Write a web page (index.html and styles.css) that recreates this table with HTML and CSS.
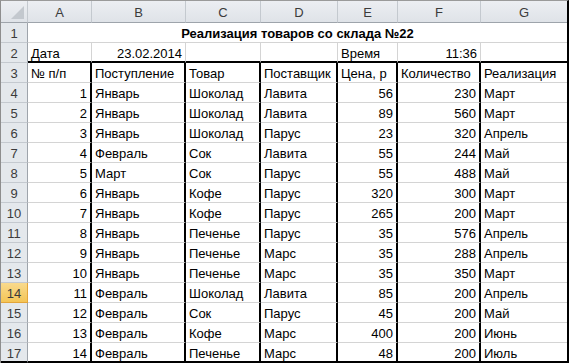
FILE: index.html
```html
<!DOCTYPE html>
<html lang="ru">
<head>
<meta charset="utf-8">
<title>Реализация товаров</title>
<link rel="stylesheet" href="styles.css">
</head>
<body>
<div class="sheet">
  <div class="hd corner"><span class="tri"></span></div>
  <div class="hd col">A</div><div class="hd col">B</div><div class="hd col">C</div><div class="hd col">D</div><div class="hd col">E</div><div class="hd col">F</div><div class="hd col last">G</div>

  <div class="hd row">1</div>
  <div class="c title">Реализация товаров со склада №22</div>

  <div class="hd row">2</div>
  <div class="c top">Дата</div><div class="c top r">23.02.2014</div><div class="c top"></div><div class="c top"></div><div class="c top">Время</div><div class="c top r">11:36</div><div class="c top last"></div>

  <div class="hd row">3</div>
  <div class="c t">№ п/п</div><div class="c t">Поступление</div><div class="c t">Товар</div><div class="c t">Поставщик</div><div class="c t">Цена, р</div><div class="c t">Количество</div><div class="c last">Реализация</div>

  <div class="hd row">4</div>
  <div class="c t r">1</div><div class="c t">Январь</div><div class="c t">Шоколад</div><div class="c t">Лавита</div><div class="c t r">56</div><div class="c t r">230</div><div class="c last">Март</div>

  <div class="hd row">5</div>
  <div class="c t r">2</div><div class="c t">Январь</div><div class="c t">Шоколад</div><div class="c t">Лавита</div><div class="c t r">89</div><div class="c t r">560</div><div class="c last">Март</div>

  <div class="hd row">6</div>
  <div class="c t r">3</div><div class="c t">Январь</div><div class="c t">Шоколад</div><div class="c t">Парус</div><div class="c t r">23</div><div class="c t r">320</div><div class="c last">Апрель</div>

  <div class="hd row">7</div>
  <div class="c t r">4</div><div class="c t">Февраль</div><div class="c t">Сок</div><div class="c t">Лавита</div><div class="c t r">55</div><div class="c t r">244</div><div class="c last">Май</div>

  <div class="hd row">8</div>
  <div class="c t r">5</div><div class="c t">Март</div><div class="c t">Сок</div><div class="c t">Парус</div><div class="c t r">55</div><div class="c t r">488</div><div class="c last">Май</div>

  <div class="hd row">9</div>
  <div class="c t r">6</div><div class="c t">Январь</div><div class="c t">Кофе</div><div class="c t">Парус</div><div class="c t r">320</div><div class="c t r">300</div><div class="c last">Март</div>

  <div class="hd row">10</div>
  <div class="c t r">7</div><div class="c t">Январь</div><div class="c t">Кофе</div><div class="c t">Парус</div><div class="c t r">265</div><div class="c t r">200</div><div class="c last">Март</div>

  <div class="hd row">11</div>
  <div class="c t r">8</div><div class="c t">Январь</div><div class="c t">Печенье</div><div class="c t">Парус</div><div class="c t r">35</div><div class="c t r">576</div><div class="c last">Апрель</div>

  <div class="hd row">12</div>
  <div class="c t r">9</div><div class="c t">Январь</div><div class="c t">Печенье</div><div class="c t">Марс</div><div class="c t r">35</div><div class="c t r">288</div><div class="c last">Апрель</div>

  <div class="hd row">13</div>
  <div class="c t r">10</div><div class="c t">Январь</div><div class="c t">Печенье</div><div class="c t">Марс</div><div class="c t r">35</div><div class="c t r">350</div><div class="c last">Март</div>

  <div class="hd row sel">14</div>
  <div class="c t r">11</div><div class="c t">Февраль</div><div class="c t">Шоколад</div><div class="c t">Лавита</div><div class="c t r">85</div><div class="c t r">200</div><div class="c last">Апрель</div>

  <div class="hd row">15</div>
  <div class="c t r">12</div><div class="c t">Февраль</div><div class="c t">Сок</div><div class="c t">Парус</div><div class="c t r">45</div><div class="c t r">200</div><div class="c last">Май</div>

  <div class="hd row">16</div>
  <div class="c t r">13</div><div class="c t">Февраль</div><div class="c t">Кофе</div><div class="c t">Марс</div><div class="c t r">400</div><div class="c t r">200</div><div class="c last">Июнь</div>

  <div class="hd row end">17</div>
  <div class="c t r end">14</div><div class="c t end">Февраль</div><div class="c t end">Печенье</div><div class="c t end">Марс</div><div class="c t r end">48</div><div class="c t r end">200</div><div class="c last end">Июль</div>
</div>
</body>
</html>
```

FILE: styles.css
```css
html, body {
  margin: 0;
  padding: 0;
  background: #ffffff;
}

.sheet {
  display: grid;
  grid-template-columns: 27px 64px 94px 75px 77px 60px 83px 86px;
  grid-template-rows: 22px repeat(17, 20px);
  width: 566px;
  border-left: 1px solid #8e8e8e;
  border-top: 1px solid #9a9a9a;
  border-right: 2px solid #000000;
  font-family: "Liberation Sans", Arial, sans-serif;
  font-size: 13px;
  color: #000000;
}

.hd {
  box-sizing: border-box;
  display: flex;
  align-items: center;
  justify-content: center;
  background: linear-gradient(#eceef2, #dfe3e8);
  color: #3b3b3b;
  font-size: 13px;
}

.col {
  border-right: 1px solid #c4c9cf;
  border-bottom: 1px solid #9ea4ab;
  padding-top: 1px;
}

.col.last {
  border-right: 0;
}

.corner {
  position: relative;
  border-right: 1px solid #c4c9cf;
  border-bottom: 1px solid #9ea4ab;
}

.tri {
  position: absolute;
  right: 3px;
  bottom: 3px;
  width: 0;
  height: 0;
  border-left: 13px solid transparent;
  border-bottom: 13px solid #c3c8ce;
}

.row {
  background: #e4e8ec;
  border-right: 1px solid #9ea4ab;
  border-bottom: 1px solid #c4c9cf;
  padding-top: 2px;
}

.row.sel {
  background: linear-gradient(#f9da8d, #f4c556);
  border-right: 1px solid #e3a53a;
  border-bottom: 1px solid #e3a53a;
}

.c {
  box-sizing: border-box;
  display: flex;
  align-items: center;
  white-space: nowrap;
  overflow: hidden;
  padding: 2px 3px 0 3px;
  border-right: 1px solid #d4d4d4;
  border-bottom: 1px solid #d4d4d4;
}

.c.r {
  justify-content: flex-end;
}

.c.title {
  grid-column: span 7;
  justify-content: center;
  font-weight: bold;
  border-right: 0;
}

.c.top {
  border-bottom: 2px solid #000000;
}

.c.t {
  border-right: 2px solid #000000;
}

.c.last {
  border-right: 0;
}

.c.end {
  border-bottom: 2px solid #000000;
}

.row.end {
  border-bottom: 2px solid #000000;
}
```
